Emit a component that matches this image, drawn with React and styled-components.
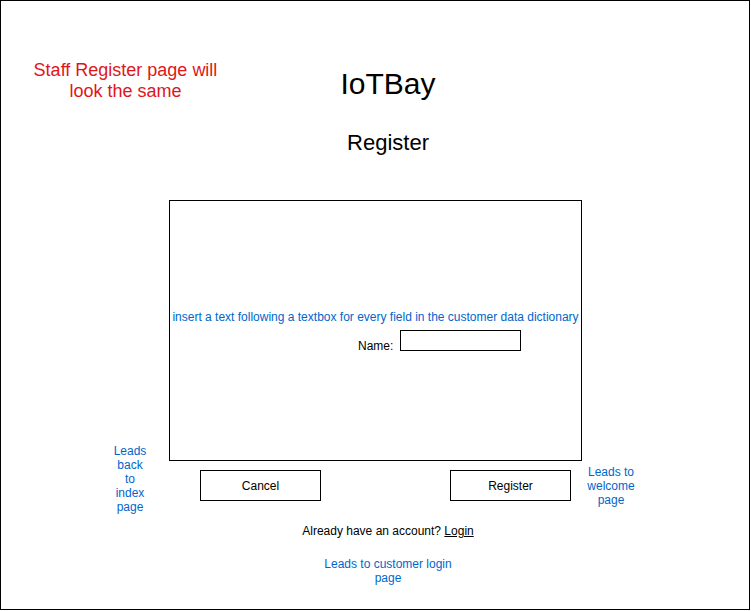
import React from 'react';
import styled, { createGlobalStyle } from 'styled-components';

const GlobalStyle = createGlobalStyle`
  html, body {
    margin: 0;
    padding: 0;
    background: #fff;
  }

  body {
    font-family: "Liberation Sans", Arial, sans-serif;
    color: #000;
  }
`;

const colors = {
  note: '#e0161a',
  link: '#0066cc',
  text: '#000',
};

const Frame = styled.div`
  box-sizing: border-box;
  width: 750px;
  height: 610px;
  border: 1px solid #000;
  overflow: hidden;
`;

const Header = styled.header`
  display: grid;
  grid-template-columns: 249px 276px 1fr;
  margin-top: 59px;
`;

const Note = styled.p`
  margin: 0;
  font-size: 18px;
  line-height: 21px;
  text-align: center;
  color: ${colors.note};
`;

const Titles = styled.div`
  display: flex;
  flex-direction: column;
  align-items: center;
`;

const Brand = styled.h1`
  margin: 7px 0 0;
  font-size: 30px;
  line-height: 34px;
  font-weight: normal;
`;

const PageTitle = styled.h2`
  margin: 29px 0 0;
  font-size: 22px;
  line-height: 26px;
  font-weight: normal;
`;

const Main = styled.main`
  display: grid;
  grid-template-columns: 168px 413px 1fr;
  grid-template-rows: 261px 31px;
  row-gap: 9px;
  margin-top: 44px;
`;

const FormBox = styled.form`
  grid-column: 2;
  grid-row: 1;
  box-sizing: border-box;
  border: 1px solid #000;
  display: flex;
  flex-direction: column;
  justify-content: center;
`;

const Hint = styled.p`
  margin: 0;
  font-size: 12px;
  line-height: 14px;
  text-align: center;
  color: ${colors.link};
`;

const FieldRow = styled.div`
  display: flex;
  align-items: flex-end;
  gap: 7px;
  margin: 6px 0 0 188px;
`;

const Label = styled.label`
  font-size: 12px;
  line-height: 14px;
  margin-bottom: -2px;
`;

const TextBox = styled.input`
  box-sizing: border-box;
  width: 121px;
  height: 21px;
  margin: 0;
  border: 1px solid #000;
  border-radius: 0;
  background: #fff;
`;

const SideNote = styled.div`
  width: ${({ width }) => width}px;
  grid-row: ${({ rows }) => rows};
  grid-column: ${({ column }) => column};
  justify-self: ${({ side }) => side};
  align-self: ${({ align }) => align};
  margin: ${({ space }) => space};
`;

const ButtonRow = styled.div`
  grid-column: 2;
  grid-row: 2;
  display: flex;
  justify-content: space-between;
  padding: 0 11px 0 31px;
`;

const Button = styled.button`
  box-sizing: border-box;
  width: 121px;
  height: 31px;
  border: 1px solid #000;
  border-radius: 0;
  background: #fff;
  font-family: "Liberation Sans", Arial, sans-serif;
  font-size: 12px;
  color: ${colors.text};
  padding: 0;
`;

const Footer = styled.footer`
  display: flex;
  flex-direction: column;
  align-items: center;
  padding-left: 26px;
  margin-top: 23px;
`;

const Prompt = styled.p`
  margin: 0 0 19px;
  font-size: 12px;
  line-height: 14px;
`;

const LoginLink = styled.a`
  color: inherit;
  text-decoration: underline;
`;

const App = () => (
  <React.Fragment>
    <GlobalStyle />
    <Frame>
      <Header>
        <Note>
          Staff Register page will
          <br />
          look the same
        </Note>
        <Titles>
          <Brand>IoTBay</Brand>
          <PageTitle>Register</PageTitle>
        </Titles>
      </Header>

      <Main>
        <SideNote width={40} column={1} rows="1 / 3" side="end" align="end" space="0 19px -13px 0">
          <Hint>
            Leads
            <br />
            back
            <br />
            to
            <br />
            index
            <br />
            page
          </Hint>
        </SideNote>

        <FormBox onSubmit={(e) => e.preventDefault()}>
          <Hint>insert a text following a textbox for every field in the customer data dictionary</Hint>
          <FieldRow>
            <Label htmlFor="name">Name:</Label>
            <TextBox id="name" type="text" />
          </FieldRow>
        </FormBox>

        <ButtonRow>
          <Button type="button">Cancel</Button>
          <Button type="button">Register</Button>
        </ButtonRow>

        <SideNote width={52} column={3} rows="2" side="start" align="center" space="0 0 0 3px">
          <Hint>
            Leads to
            <br />
            welcome
            <br />
            page
          </Hint>
        </SideNote>
      </Main>

      <Footer>
        <Prompt>
          Already have an account?
          {' '}
          <LoginLink href="#login">Login</LoginLink>
        </Prompt>
        <Hint>
          Leads to customer login
          <br />
          page
        </Hint>
      </Footer>
    </Frame>
  </React.Fragment>
);

export default App;
